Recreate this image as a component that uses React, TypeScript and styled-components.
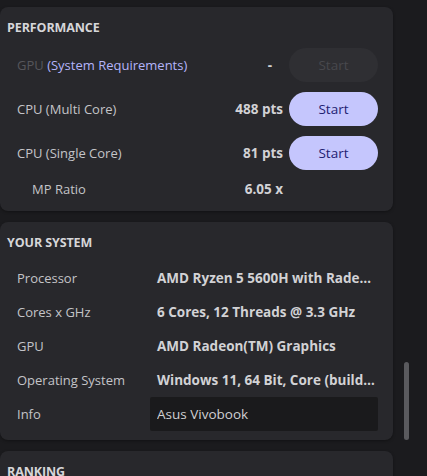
import React, { FunctionComponent } from "react";
import styled, { createGlobalStyle } from "styled-components";

const GlobalStyle = createGlobalStyle`
	html, body {
		margin: 0;
		padding: 0;
		background: #1b1b1e;
		overflow: hidden;
	}
	body {
		font-family: "Open Sans", "Noto Sans", sans-serif;
		font-size: 13px;
		color: #c9c9cc;
	}
`;

type PerfRow = {
	label: string;
	link?: string;
	value: string;
	disabled?: boolean;
};

const perfRows: PerfRow[] = [
	{ label: "GPU", link: "(System Requirements)", value: "-", disabled: true },
	{ label: "CPU (Multi Core)", value: "488 pts" },
	{ label: "CPU (Single Core)", value: "81 pts" },
];

const systemRows = [
	{ label: "Processor", value: "AMD Ryzen 5 5600H with Radeon Graphics" },
	{ label: "Cores x GHz", value: "6 Cores, 12 Threads @ 3.3 GHz" },
	{ label: "GPU", value: "AMD Radeon(TM) Graphics" },
	{ label: "Operating System", value: "Windows 11, 64 Bit, Core (build 22631)" },
];

const App: FunctionComponent = () => {
	return (
		<>
			<GlobalStyle />
			<Page>
				<Column>
					<Card>
						<Title $gap={12}>Performance</Title>
						<PerfList>
							{perfRows.map((row) => (
								<PerfLine key={row.label}>
									<Label $dim={row.disabled}>
										{row.label}
										{row.link && <Link> {row.link}</Link>}
									</Label>
									<Score $dash={row.value === "-"}>{row.value}</Score>
									<StartButton disabled={row.disabled}>Start</StartButton>
								</PerfLine>
							))}
							<RatioLine>
								<Label>MP Ratio</Label>
								<Score>6.05 x</Score>
								<span />
							</RatioLine>
						</PerfList>
					</Card>

					<Card>
						<Title $gap={10}>Your System</Title>
						{systemRows.map((row) => (
							<InfoLine key={row.label}>
								<Label>{row.label}</Label>
								<Value>{row.value}</Value>
							</InfoLine>
						))}
						<InfoLine>
							<Label>Info</Label>
							<InfoInput defaultValue="Asus Vivobook" />
						</InfoLine>
					</Card>

					<Card>
						<Title $gap={10}>Ranking</Title>
					</Card>
				</Column>
				<Track>
					<Thumb />
				</Track>
			</Page>
		</>
	);
};

export default App;

const Page = styled.div`
	display: flex;
	align-items: flex-start;
	height: 476px;
	overflow: hidden;
`;

const Column = styled.div`
	width: 393px;
	padding-top: 7px;
	display: flex;
	flex-direction: column;
	gap: 11px;
`;

const Card = styled.section`
	background: #28282c;
	border-radius: 8px;
	padding: 13px 15px 9px 7px;
	box-shadow: 0 1px 3px rgba(0, 0, 0, 0.35);
`;

const Title = styled.h2<{ $gap: number }>`
	margin: 0 0 ${(p) => p.$gap}px;
	font-size: 12.5px;
	line-height: 16px;
	font-weight: 700;
	text-transform: uppercase;
	color: #d6d6d9;
	letter-spacing: -0.1px;
`;

const PerfList = styled.div`
	display: flex;
	flex-direction: column;
	gap: 10px;
	padding-bottom: 6px;
`;

const PerfLine = styled.div`
	display: grid;
	grid-template-columns: 1fr auto 89px;
	column-gap: 6px;
	align-items: center;
	height: 34px;
	padding-left: 10px;
`;

const RatioLine = styled(PerfLine)`
	height: 16px;
	padding-left: 25px;
`;

const Label = styled.div<{ $dim?: boolean }>`
	color: ${(p) => (p.$dim ? "#56565b" : "#c4c4c8")};
	white-space: nowrap;
`;

const Link = styled.span`
	color: #b4b4fa;
`;

const Score = styled.div<{ $dash?: boolean }>`
	font-size: 13.5px;
	font-weight: 700;
	color: #d2d2d5;
	text-align: right;
	margin-right: ${(p) => (p.$dash ? "11px" : "0")};
`;

const StartButton = styled.button`
	height: 34px;
	border: none;
	border-radius: 17px;
	background: #c5c6fd;
	color: #1f2272;
	font-family: inherit;
	font-size: 13.5px;
	cursor: pointer;

	&:disabled {
		background: #2f2f33;
		color: #48484d;
		cursor: default;
	}
`;

const InfoLine = styled.div`
	display: grid;
	grid-template-columns: 133px 1fr;
	align-items: center;
	height: 34px;
	padding-left: 10px;
`;

const Value = styled.div`
	padding-left: 7px;
	font-size: 13.5px;
	font-weight: 700;
	color: #d2d2d5;
	white-space: nowrap;
	overflow: hidden;
	text-overflow: ellipsis;
`;

const InfoInput = styled.input`
	height: 34px;
	box-sizing: border-box;
	padding: 0 7px;
	border: none;
	border-radius: 2px;
	background: #1a1a1c;
	color: #d0d0d3;
	font-family: inherit;
	font-size: 13.5px;
	outline: none;
`;

const Track = styled.div`
	flex: 1;
	display: flex;
	justify-content: center;
	padding-top: 362px;
	padding-right: 8px;
`;

const Thumb = styled.div`
	width: 5px;
	height: 78px;
	border-radius: 3px;
	background: #5a5a5e;
`;
